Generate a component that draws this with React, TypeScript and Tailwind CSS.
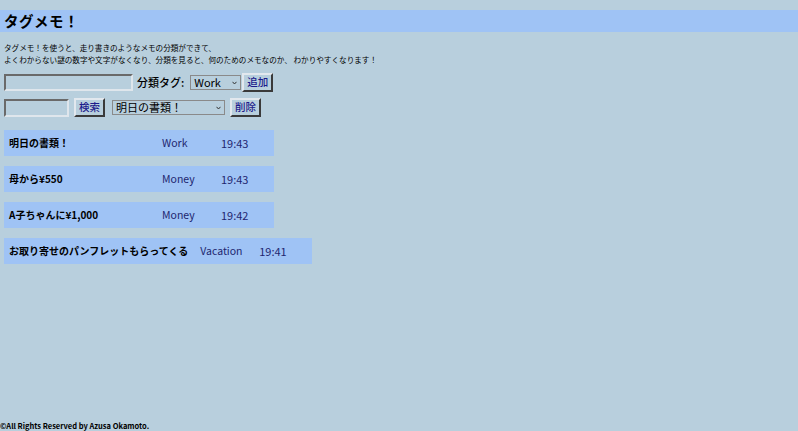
import React from 'react'

const MEMOS = [
  { id: 1, title: '明日の書類！', tag: 'Work', time: '19:43' },
  { id: 2, title: '母から¥550', tag: 'Money', time: '19:43' },
  { id: 3, title: 'A子ちゃんに¥1,000', tag: 'Money', time: '19:42' },
  { id: 4, title: 'お取り寄せのパンフレットもらってくる', tag: 'Vacation', time: '19:41' },
]

const FONT = { fontFamily: '"Noto Sans CJK JP", "Noto Sans", sans-serif' }

function Btn({ children, className = '' }: { children: React.ReactNode; className?: string }) {
  return (
    <button
      className={`h-[19px] px-[3px] text-[10.5px] leading-none font-medium text-[#1c1c8c] bg-[#b8cfdd] border-2 border-t-[#e2e8ee] border-l-[#e2e8ee] border-r-[#3a3a3a] border-b-[#3a3a3a] ${className}`}
    >
      {children}
    </button>
  )
}

function Select({ value, options, className = '' }: { value: string; options: string[]; className?: string }) {
  return (
    <div className={`relative h-[15px] ${className}`}>
      <select
        defaultValue={value}
        className="appearance-none block w-full h-full text-[11px] leading-[11px] border border-[#8a8a8a] bg-transparent pl-[3px] pr-[10px] py-0"
      >
        {options.map((o) => (
          <option key={o}>{o}</option>
        ))}
      </select>
      <svg className="absolute right-[4px] top-[6px] pointer-events-none" width="5" height="4" viewBox="0 0 5 4">
        <path d="M0.5 0.8 L2.5 3 L4.5 0.8" fill="none" stroke="#333" strokeWidth="1" />
      </svg>
    </div>
  )
}

const inputCls =
  'border-2 border-t-[#6a6a6a] border-l-[#6a6a6a] border-r-[#dfe6ec] border-b-[#dfe6ec] bg-transparent'

export default function App() {
  return (
    <div className="h-screen flex flex-col bg-[#b8cfdd] text-black overflow-hidden leading-none" style={FONT}>
      <header className="mt-[10px] h-[22px] bg-[#9fc3f5] flex items-center px-[4px]">
        <h1 className="text-[14.5px] font-bold tracking-[0.5px] leading-none">タグメモ！</h1>
      </header>

      <p className="mt-[10px] px-[4px] text-[7.6px] leading-[12px]">
        タグメモ！を使うと、走り書きのようなメモの分類ができて、
        <br />
        よくわからない謎の数字や文字がなくなり、分類を見ると、何のためのメモなのか、 わかりやすくなります！
      </p>

      {/* 入力フォーム */}
      <div className="mt-[7px] px-[4px] flex items-center h-[19px]">
        <input className={`w-[129px] h-[17px] ${inputCls}`} />
        <span className="ml-[4px] text-[11px] font-medium">分類タグ:</span>
        <Select className="ml-[6px] w-[51px]" value="Work" options={['Work', 'Money', 'Vacation']} />
        <Btn className="ml-[1px]">追加</Btn>
      </div>

      <div className="mt-[6px] px-[4px] flex items-center h-[19px]">
        <input className={`w-[65px] h-[18px] ${inputCls}`} />
        <Btn className="ml-[5px]">検索</Btn>
        <Select
          className="ml-[7px] w-[113px]"
          value="明日の書類！"
          options={MEMOS.map((m) => m.title)}
        />
        <Btn className="ml-[5px]">削除</Btn>
      </div>

      {/* メモ一覧 */}
      <ul className="mt-[13px] px-[4px] flex flex-col items-start gap-[10px]">
        {MEMOS.map((m) => (
          <li key={m.id} className="h-[26px] bg-[#9fc3f5] flex items-center pl-[5px] pr-[25px]">
            <span className="min-w-[141px] mr-[12px] text-[10px] font-bold whitespace-nowrap">{m.title}</span>
            <span className="w-[59px] text-[10.5px] text-[#1e2670]">{m.tag}</span>
            <span className="w-[28px] text-[11px] text-[#1e2670] whitespace-nowrap">{m.time}</span>
          </li>
        ))}
      </ul>

      <footer className="mt-auto text-[7.5px] font-bold leading-[10px]">©All Rights Reserved by Azusa Okamoto.</footer>
    </div>
  )
}
